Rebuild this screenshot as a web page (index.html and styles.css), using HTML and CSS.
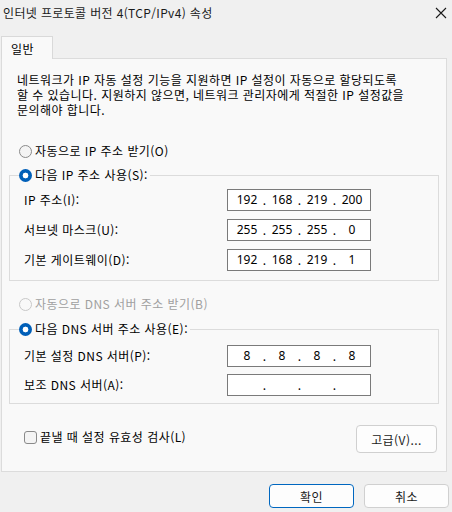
FILE: index.html
```html
<!DOCTYPE html>
<html lang="ko">
<head>
<meta charset="utf-8">
<title>인터넷 프로토콜 버전 4(TCP/IPv4) 속성</title>
<link rel="stylesheet" href="styles.css">
</head>
<body>
<div class="titlebar">
  <span class="title">인터넷 프로토콜 버전 4(TCP/IPv4) 속성</span>
  <svg class="close" width="12" height="12" viewBox="0 0 12 12"><path d="M1 1 L11 11 M11 1 L1 11" stroke="#1a1a1a" stroke-width="1.1" fill="none"/></svg>
</div>
<div class="tabs"><div class="tab">일반</div></div>
<div class="panel">
  <p class="desc">네트워크가 IP 자동 설정 기능을 지원하면 IP 설정이 자동으로 할당되도록<br>할 수 있습니다. 지원하지 않으면, 네트워크 관리자에게 적절한 IP 설정값을<br>문의해야 합니다.</p>

  <div class="radio-row first"><span class="radio"></span>자동으로 IP 주소 받기(O)</div>

  <fieldset class="group g1">
    <legend><span class="radio checked"></span>다음 IP 주소 사용(S):</legend>
    <div class="fields">
      <label>IP 주소(I):</label>
      <div class="ipbox"><span>192</span><i>.</i><span>168</span><i>.</i><span>219</span><i>.</i><span>200</span></div>
      <label>서브넷 마스크(U):</label>
      <div class="ipbox"><span>255</span><i>.</i><span>255</span><i>.</i><span>255</span><i>.</i><span>0</span></div>
      <label>기본 게이트웨이(D):</label>
      <div class="ipbox"><span>192</span><i>.</i><span>168</span><i>.</i><span>219</span><i>.</i><span>1</span></div>
    </div>
  </fieldset>

  <div class="radio-row disabled"><span class="radio"></span>자동으로 DNS 서버 주소 받기(B)</div>

  <fieldset class="group g2">
    <legend><span class="radio checked"></span>다음 DNS 서버 주소 사용(E):</legend>
    <div class="fields dns">
      <label>기본 설정 DNS 서버(P):</label>
      <div class="ipbox"><span>8</span><i>.</i><span>8</span><i>.</i><span>8</span><i>.</i><span>8</span></div>
      <label>보조 DNS 서버(A):</label>
      <div class="ipbox"><span></span><i>.</i><span></span><i>.</i><span></span><i>.</i><span></span></div>
    </div>
  </fieldset>

  <div class="bottom-row">
    <div class="check-row"><span class="checkbox"></span>끝낼 때 설정 유효성 검사(L)</div>
    <button class="btn adv">고급(V)...</button>
  </div>
</div>
<div class="actions">
  <button class="btn primary">확인</button>
  <button class="btn">취소</button>
</div>
</body>
</html>
```

FILE: styles.css
```css
* { box-sizing: border-box; }
html, body { margin: 0; padding: 0; }
body {
  width: 452px;
  height: 512px;
  background: #f0f0f0;
  font-family: "Noto Sans CJK KR", "Noto Sans", sans-serif;
  font-size: 12px;
  line-height: 16px;
  letter-spacing: 0.45px;
  color: #000;
  overflow: hidden;
}
.titlebar {
  height: 26px;
  display: flex;
  align-items: center;
  justify-content: space-between;
  padding: 0 5px 0 3px;
}
.title { color: #1a1a1a; letter-spacing: 0.35px; }
.close { display: block; }
.tabs {
  margin-top: 10px;
  padding-left: 1px;
  display: flex;
  position: relative;
  z-index: 1;
  margin-bottom: -1px;
}
.tab {
  width: 52px;
  height: 23px;
  background: #f9f9f9;
  border: 1px solid #d9d9d9;
  border-bottom: none;
  padding: 3px 0 0 9px;
  line-height: 18px;
}
.panel {
  margin: 0 5px 0 1px;
  height: 414px;
  background: #f9f9f9;
  border: 1px solid #dcdcdc;
  padding: 0;
}
.desc {
  margin: 13px 0 0 0;
  padding-left: 15px;
  line-height: 15px;
  white-space: nowrap;
}
.radio-row {
  display: flex;
  align-items: center;
  height: 16px;
  padding-left: 17px;
}
.radio-row.first { margin-top: 26px; }
.radio-row.disabled { margin-top: 15px; color: #a0a0a0; }
.radio {
  display: inline-block;
  width: 13px;
  height: 13px;
  border-radius: 50%;
  border: 1px solid #8a8a8a;
  background: #f4f4f4;
  margin-right: 3px;
  flex: none;
}
.disabled .radio { border-color: #c8c8c8; background: #f9f9f9; }
.radio.checked {
  border: none;
  background: radial-gradient(circle at center, #fff 0 2.6px, #005fb8 3.2px);
}
.group {
  margin: 0 7px 0 7px;
  border: 1px solid #dcdcdc;
  padding: 6px 0 9px 0;
}
.g1 { margin-top: 8px; }
.g2 { margin-top: 9px; padding-top: 8px; padding-bottom: 7px; }
.group legend {
  margin-left: 9px;
  padding: 0 2px 0 0;
  height: 16px;
  line-height: 16px;
  display: flex;
  align-items: center;
}
.fields {
  display: grid;
  grid-template-columns: 203px 144px;
  row-gap: 8px;
  padding: 0 14px;
  align-items: center;
}
.fields.dns { row-gap: 7px; }
.fields label { line-height: 16px; }
.ipbox {
  height: 22px;
  background: #fff;
  border: 1px solid #7a7a7a;
  display: flex;
  align-items: center;
  padding-left: 4px;
  letter-spacing: 0;
}
.ipbox span {
  width: 30px;
  text-align: center;
  font-family: "Noto Sans", "DejaVu Sans", sans-serif;
}
.ipbox i {
  font-style: normal;
  width: 5px;
  text-align: center;
}
.bottom-row {
  margin: 21px 9px 0 22px;
  display: flex;
  justify-content: space-between;
  align-items: flex-start;
}
.check-row {
  display: flex;
  align-items: center;
  margin-top: 4px;
}
.checkbox {
  width: 13px;
  height: 13px;
  border: 1px solid #8a8a8a;
  border-radius: 3px;
  background: #f4f4f4;
  margin-right: 3px;
}
.btn {
  font-family: inherit;
  font-size: 12px;
  letter-spacing: inherit;
  color: #1a1a1a;
  background: #fdfdfd;
  border: 1px solid #d0d0d0;
  border-radius: 4px;
  padding: 0;
  height: 24px;
  width: 85px;
}
.btn.adv { height: 28px; width: 81px; }
.btn.primary { border-color: #0067c0; }
.actions {
  display: flex;
  justify-content: flex-end;
  gap: 10px;
  margin: 12px 3px 0 0;
}
```
